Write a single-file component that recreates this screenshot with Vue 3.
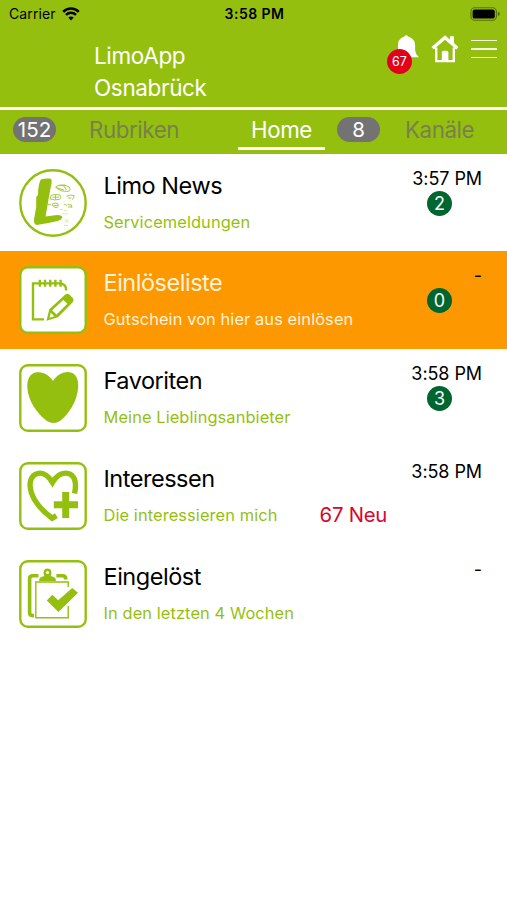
<script setup>
import { ref } from 'vue'

const activeTab = ref('Home')

const items = [
  { id: 1, icon: 'news', title: 'Limo News', subtitle: 'Servicemeldungen', time: '3:57 PM', count: 2 },
  { id: 2, icon: 'list', title: 'Einlöseliste', subtitle: 'Gutschein von hier aus einlösen', time: '-', count: 0, highlight: true },
  { id: 3, icon: 'heart', title: 'Favoriten', subtitle: 'Meine Lieblingsanbieter', time: '3:58 PM', count: 3 },
  { id: 4, icon: 'interest', title: 'Interessen', subtitle: 'Die interessieren mich', time: '3:58 PM', fresh: '67 Neu' },
  { id: 5, icon: 'done', title: 'Eingelöst', subtitle: 'In den letzten 4 Wochen', time: '-' }
]
</script>

<template>
  <div class="app">
    <div class="status-bar">
      <div class="carrier">
        <span class="carrier-name">Carrier</span>
        <svg class="wifi" viewBox="0 0 18 14">
          <path d="M1.2 4.8 C5.6 .3 12.4 .3 16.8 4.8" />
          <path d="M4 7.8 C6.8 5 11.2 5 14 7.8" />
          <path class="wifi-dot" d="M9 13.4 L6.3 10.6 C7.8 9.2 10.2 9.2 11.7 10.6 Z" />
        </svg>
      </div>
      <span class="clock">3:58 PM</span>
      <svg class="battery" viewBox="0 0 31 14">
        <rect class="battery-frame" x="1" y=".8" width="25.4" height="12.4" rx="3.8" />
        <rect x="2.6" y="2.4" width="22.2" height="9.2" rx="2.2" />
        <path class="battery-tip" d="M27.8 4.8 Q30 5.4 30 7 Q30 8.6 27.8 9.2 Z" />
      </svg>
    </div>

    <header class="header">
      <h1 class="app-title">LimoApp<br>Osnabrück</h1>
      <div class="actions">
        <button class="bell-btn">
          <svg class="bell" viewBox="0 0 24 24">
            <path d="M11.2 .2 Q12.9 .2 13.4 1.8 C17.8 3 20.1 6.2 20.1 10.3 V15.5 Q20.3 18.8 24 22.2 H.6 Q3 19 3 15.5 V10.3 C3 6.2 4.8 3 9 1.8 Q9.5 .2 11.2 .2 Z" />
          </svg>
          <span class="bell-badge">67</span>
        </button>
        <svg class="house" viewBox="0 0 28 28">
          <path class="house-roof" d="M1.6 13.2 L14 2.4 L26.4 13.2" />
          <path class="house-chimney" d="M19 1.2 H23 V10 L19 6 Z" />
          <path class="house-wall" d="M5.2 12.5 V26.1 H22.8 V12.5" />
          <path class="house-chimney" d="M10.8 26 V17.6 Q10.8 15.8 12.6 15.8 H15.6 Q17.4 15.8 17.4 17.6 V26 Z" />
        </svg>
        <div class="menu">
          <span></span>
          <span></span>
          <span></span>
        </div>
      </div>
    </header>

    <nav class="tabs">
      <span class="pill">152</span>
      <span class="tab tab-left" @click="activeTab = 'Rubriken'">Rubriken</span>
      <span class="tab tab-home" :class="{ active: activeTab === 'Home' }" @click="activeTab = 'Home'">Home</span>
      <span class="pill">8</span>
      <span class="tab tab-right" @click="activeTab = 'Kanäle'">Kanäle</span>
    </nav>

    <div class="list">
      <div v-for="item in items" :key="item.id" class="row" :class="{ highlight: item.highlight }">
        <svg class="row-icon" viewBox="0 0 68 68">
          <circle v-if="item.icon === 'news'" class="frame" cx="34" cy="34" r="32.7" />
          <rect v-else class="frame" x="1.3" y="1.3" width="65.4" height="65.4" rx="7.5" />

          <g v-if="item.icon === 'news'">
            <path class="fill" d="M21.7 10.6 Q27 9.2 32 9.8 Q33.4 12 31.8 18 L29.2 32 L26.6 47.4 L36 46.2 Q42 45.4 43.4 47.8 Q42.8 51 38.5 52 Q32 53.4 25 54.8 L18 56 Q14.8 55.4 14.9 51 L17.2 38 L17.2 28 L19 26 Q19 16 21.7 10.6 Z" />
            <g class="sketch">
              <path d="M37 17.6 Q40 15.4 45.5 16 L50.2 18 Q52.2 22 49 22.4 L43 22 Q37.5 20.4 37 17.6 M36.5 18.5 L45 21 M44 16 L47.5 21 M39 16.6 H46" />
              <path d="M32 26.4 Q35 24.8 41 26 Q43 28.6 40.5 30.4 Q35 31.4 31.2 30 Z M33.4 28.2 H40 M36.5 26 V30.5" />
              <path d="M47.5 27.3 Q51 25.2 55 26.6 Q55.5 29.4 53 30.6 M49 29 H52.4" />
              <path d="M27.5 35.6 H32 M33.2 35 Q36 33 39 35 Q40.3 38 37 38.6 Q33.5 38.5 33.2 35 M34.6 36.5 H38.6" />
              <path d="M45 35 L48 36.6 M48.5 35.6 L52.8 36 M49 38 H53.4 M52.6 36 V38.4" />
              <path class="faint" d="M41 40.4 H44 M44.6 41.6 H48 M43 44.8 H49 M45.5 51.2 H50 M46 53 H49.5 M45 56.5 H49" />
            </g>
          </g>

          <g v-else-if="item.icon === 'list'">
            <path class="line" d="M25 53.4 H14 V17.4 H40 Q47.2 17.4 47.2 24.5" />
            <path class="line" d="M20.8 13.8 V20.8 M26 13.8 V20.8 M31.2 13.8 V20.8 M36.4 13.8 V20.8 M41.6 13.8 V20.8" />
            <path class="fill" fill-rule="evenodd" d="M27.5 54.7 L30.3 43.3 L46 28.8 Q48.2 26.8 50.4 28.6 L54 32.2 Q55.6 34.4 53.7 36.3 L39 51.2 Z M33.2 44.3 L44.3 34 L48.4 37.7 L37.5 48.5 Z M30.5 51.7 L35.3 50.3 L31.8 46.8 Z" />
          </g>

          <g v-else-if="item.icon === 'heart'">
            <path class="fill" d="M34 17 C38 10.5 44 7.8 49.5 8 C56.5 8.3 59.6 14.5 59.2 23 C58.5 38 48.5 51.5 41 57 Q34.5 60.8 28 57 C18 50 8.7 36 8.3 23 C8 14.5 11.5 8.3 18.5 8.2 C24 8.1 30 10.5 34 17 Z" />
          </g>

          <g v-else-if="item.icon === 'interest'">
            <path class="heart-line" d="M55.5 31.5 C57.5 23 57 12.8 48.5 11.3 C42 10.4 37.2 14 33.5 20.5 C29.5 14 25 10.4 19.5 11.3 C11 12.7 9.5 22 12.5 31 C16 41 24 49.5 33.2 56.2 L37.4 53.6" />
            <path class="fill" d="M43.2 30 H50.2 V39.3 H59 V46.3 H50.2 V56 H43.2 V46.3 H34.8 V39.3 H43.2 Z" />
          </g>

          <g v-else>
            <path class="clip" d="M19.5 15.7 H13.6 Q10.6 15.7 10.6 18.7 V52.5 Q10.6 55.6 13.6 55.6 H15" />
            <path class="clip" d="M37.4 15.7 H43.6 Q46.8 15.7 46.8 19.4" />
            <path class="fill" d="M20.2 21 V19.6 Q20.4 17.4 23 16.8 L25.2 16 Q22.9 8.4 28.5 8.4 Q34.1 8.4 31.8 16 L34 16.8 Q36.6 17.4 36.8 19.6 V21 Z" />
            <circle cx="28.5" cy="12.5" r="1.6" fill="#fff" />
            <path class="sheet" d="M49.2 27 V22 H16.8 V57.8 H49.2 V46" />
            <path class="fill" d="M27.8 40.4 L33.3 34.8 L39.2 40.2 L53.2 28 L59 32.8 L39.4 52 Z" />
          </g>
        </svg>

        <div class="row-text">
          <h3 class="row-title">{{ item.title }}</h3>
          <p class="row-subtitle">{{ item.subtitle }}</p>
        </div>
        <span v-if="item.fresh" class="fresh">{{ item.fresh }}</span>
        <div class="row-side">
          <span class="time">{{ item.time }}</span>
          <span v-if="item.count !== undefined" class="count">{{ item.count }}</span>
        </div>
      </div>
    </div>
  </div>
</template>

<style>
body {
  margin: 0;
  background: #fff;
}
</style>

<style scoped>
.app {
  width: 507px;
  height: 900px;
  overflow: hidden;
  background: #fff;
  font-family: Inter, "Liberation Sans", sans-serif;
  color: #000;
}

.status-bar {
  display: grid;
  grid-template-columns: 1fr auto 1fr;
  align-items: center;
  height: 27px;
  padding: 0 7px 0 9px;
  box-sizing: border-box;
  background: #95bf0f;
  font-size: 14px;
}

.carrier {
  display: flex;
  align-items: center;
  gap: 6px;
}

.carrier-name {
  letter-spacing: 0.1px;
}

.wifi {
  width: 18px;
  height: 14px;
  fill: none;
  stroke: #000;
  stroke-width: 2.5;
}

.wifi-dot {
  fill: #000;
  stroke: none;
}

.clock {
  font-weight: 600;
  letter-spacing: 0.45px;
}

.battery {
  justify-self: end;
  width: 31px;
  height: 14px;
  margin-right: -1px;
}

.battery-frame {
  fill: none;
  stroke: #587109;
  stroke-width: 1.1;
}

.battery-tip {
  fill: #587109;
}

.header {
  display: flex;
  justify-content: space-between;
  height: 80px;
  padding: 0 10px 0 94px;
  background: #95bf0f;
}

.app-title {
  margin: 13px 0 0;
  font-size: 22.5px;
  line-height: 32px;
  font-weight: 400;
  letter-spacing: -0.35px;
  color: #fff;
}

.actions {
  display: flex;
  align-items: flex-start;
  padding-top: 8px;
}

.bell-btn {
  position: relative;
  width: 24px;
  height: 24px;
  margin-right: 12px;
  padding: 0;
  border: none;
  background: none;
}

.bell {
  display: block;
  width: 24px;
  height: 24px;
  fill: #fff;
}

.bell-badge {
  position: absolute;
  left: -8px;
  top: 14px;
  width: 25px;
  height: 25px;
  border-radius: 50%;
  background: #e2001a;
  color: #fff;
  font-family: Inter, sans-serif;
  font-size: 12.5px;
  line-height: 25px;
  text-align: center;
}

.house {
  width: 28px;
  height: 28px;
  margin-right: 12px;
}

.house-roof {
  fill: none;
  stroke: #fff;
  stroke-width: 3.4;
}

.house-wall {
  fill: none;
  stroke: #fff;
  stroke-width: 2.4;
}

.house-chimney {
  fill: #fff;
}

.menu {
  display: flex;
  flex-direction: column;
  gap: 7px;
  width: 26px;
  padding-top: 4.5px;
}

.menu span {
  height: 1.6px;
  background: #f3f8de;
}

.tabs {
  display: flex;
  align-items: center;
  height: 43.6px;
  padding: 0 0 0 13px;
  border-top: 3.5px solid #fff;
  box-sizing: content-box;
  background: #95bf0f;
  font-size: 22.3px;
  letter-spacing: -0.4px;
}

.pill {
  width: 43px;
  height: 25px;
  margin-bottom: 4.5px;
  border-radius: 13px;
  background: #737373;
  color: #fff;
  font-size: 20.5px;
  line-height: 26px;
  letter-spacing: 0;
  text-align: center;
}

.tab {
  height: 38px;
  line-height: 36px;
  color: #76824c;
  cursor: pointer;
  box-sizing: border-box;
  margin-bottom: 2px;
}

.tab-left {
  width: 149px;
  margin-left: 33px;
}

.tab-home {
  width: 87px;
  margin-right: 12px;
  text-align: center;
}

.tab-home.active {
  color: #fff;
  border-bottom: 3.5px solid #fff;
}

.tab-right {
  margin-left: 25px;
}

.row {
  display: flex;
  height: 97.8px;
  padding: 15px 25px 0 19px;
  box-sizing: border-box;
}

.row-icon {
  flex: none;
  width: 68px;
  height: 68px;
}

.frame {
  fill: #fff;
  stroke: #95bf0f;
  stroke-width: 2.4;
}

.fill {
  fill: #95bf0f;
}

.line {
  fill: none;
  stroke: #95bf0f;
  stroke-width: 2.4;
}

.sketch {
  fill: none;
  stroke: #a9ca45;
  stroke-width: 1;
}

.faint {
  stroke: #dbe8b0;
}

.heart-line {
  fill: none;
  stroke: #95bf0f;
  stroke-width: 5.4;
}

.clip {
  fill: none;
  stroke: #95bf0f;
  stroke-width: 3.6;
}

.sheet {
  fill: none;
  stroke: #95bf0f;
  stroke-width: 1.4;
}

.row-text {
  flex: none;
  width: 216px;
  margin-left: 16.5px;
}

.row-title {
  margin: 3px 0 0;
  font-size: 23.5px;
  line-height: 28px;
  font-weight: 400;
  letter-spacing: -0.48px;
  white-space: nowrap;
}

.row-subtitle {
  margin: 11px 0 0;
  font-size: 16.4px;
  line-height: 22px;
  letter-spacing: 0.1px;
  color: #95bf0f;
  white-space: nowrap;
}

.fresh {
  margin-top: 40.5px;
  font-size: 20.3px;
  line-height: 26px;
  letter-spacing: -0.2px;
  color: #d9042f;
}

.row-side {
  display: flex;
  flex-direction: column;
  align-items: flex-end;
  margin-left: auto;
}

.time {
  font-size: 18px;
  line-height: 20px;
  letter-spacing: -0.08px;
}

.count {
  width: 25px;
  height: 25px;
  margin: 2px 30px 0 0;
  border-radius: 50%;
  background: #00662f;
  color: #fff;
  font-size: 18px;
  line-height: 25px;
  text-align: center;
}

.highlight {
  background: #fd9800;
}

.highlight .row-title,
.highlight .row-subtitle {
  color: #fff3dc;
}
</style>
